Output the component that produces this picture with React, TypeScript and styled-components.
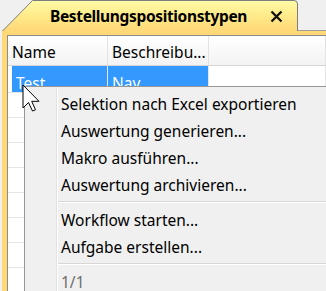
import React from "react";
import styled, { createGlobalStyle } from "styled-components";

const Global = createGlobalStyle`
  html, body { margin: 0; padding: 0; background: #f0f0f0; overflow: hidden; }
  #root { width: 326px; height: 291px; }
`;

const Page = styled.div`
  position: relative;
  width: 326px;
  height: 291px;
  overflow: hidden;
  display: flex;
  flex-direction: column;
  background: #f0f0f0;
  font-family: "Noto Sans", "Open Sans", sans-serif;
  color: #000;
`;

const TabStrip = styled.div`
  height: 36px;
  display: flex;
  align-items: flex-end;
  padding-left: 2px;
  box-sizing: border-box;
`;

const Tab = styled.div`
  position: relative;
  width: 296px;
  height: 31px;
  display: flex;
  align-items: center;
  padding-left: 48px;
  box-sizing: border-box;
`;

const TabShape = styled.svg`
  position: absolute;
  left: 0;
  top: 0;
  width: 296px;
  height: 31px;
`;

const TabTitle = styled.span`
  position: relative;
  font-weight: 700;
  font-size: 15.5px;
  letter-spacing: -0.35px;
  margin-top: 1px;
`;

const CloseButton = styled.span`
  position: relative;
  margin-left: 23px;
  margin-top: 1px;
  display: flex;
`;

const StripRest = styled.div`
  flex: 1;
  height: 100%;
  border-bottom: 1px solid #a0a0a0;
  box-sizing: border-box;
`;

const Frame = styled.div`
  flex: 1;
  margin-left: 2px;
  padding: 4px 0 0 5px;
  background: #ffd877;
  display: flex;
`;

const Grid = styled.div`
  flex: 1;
  background: #fff;
  border-top: 1px solid #8c8c8c;
  border-left: 1px solid #8c8c8c;
`;

const Row = styled.div<{ $height: number; $header?: boolean }>`
  display: grid;
  grid-template-columns: 100px 101px 1fr;
  height: ${(p) => p.$height}px;
  box-sizing: border-box;
  border-bottom: 1px solid ${(p) => (p.$header ? "#d5d5d5" : "#e6e6e6")};
  background: ${(p) => (p.$header ? "linear-gradient(#ffffff, #f3f3f3)" : "#fff")};
`;

const HeaderCell = styled.div`
  display: flex;
  align-items: center;
  padding: 3px 0 0 4px;
  font-size: 15.5px;
  border-right: 1px solid #e3e3e3;
  white-space: nowrap;
  overflow: hidden;
`;

const Cell = styled.div<{ $selected?: boolean; $inset?: number }>`
  display: flex;
  align-items: center;
  font-size: 15.5px;
  padding: 7px 0 0 4px;
  box-sizing: border-box;
  border-right: 1px solid #e6e6e6;
  color: ${(p) => (p.$selected ? "#fff" : "#000")};
  background: ${(p) => (p.$selected ? "#3399ff" : "transparent")};
  margin-left: ${(p) => p.$inset ?? 0}px;
  white-space: nowrap;
  overflow: hidden;
`;

const Menu = styled.div`
  position: absolute;
  left: 24px;
  top: 86px;
  right: -10px;
  bottom: -10px;
  background: #f0f0f0;
  border-top: 1px solid #979797;
  border-left: 1px solid #979797;
  padding-top: 3px;
`;

const Gutter = styled.div`
  position: absolute;
  left: 31px;
  top: 0;
  bottom: 0;
  width: 1px;
  background: #e2e2e2;
  border-right: 1px solid #ffffff;
`;

const MenuItem = styled.div<{ $disabled?: boolean }>`
  position: relative;
  height: 27px;
  display: flex;
  align-items: center;
  padding-left: 36px;
  font-size: 15.5px;
  white-space: nowrap;
  color: ${(p) => (p.$disabled ? "#6d6d6d" : "#000")};
`;

const Separator = styled.div`
  position: relative;
  height: 8px;
  margin-left: 33px;
  display: flex;
  align-items: center;
  &::after {
    content: "";
    display: block;
    width: 100%;
    height: 1px;
    background: #d7d7d7;
    border-bottom: 1px solid #ffffff;
  }
`;

const Cursor = styled.svg`
  position: absolute;
  left: 22px;
  top: 84px;
`;

const rows = [0, 1, 2, 3, 4, 5, 6, 7];

export default function App() {
  return (
    <Page>
      <Global />
      <TabStrip>
        <Tab>
          <TabShape viewBox="0 0 296 31">
            <defs>
              <linearGradient id="tabg" x1="0" y1="0" x2="0" y2="1">
                <stop offset="0" stopColor="#fffba8" />
                <stop offset="0.45" stopColor="#ffec8c" />
                <stop offset="1" stopColor="#ffd877" />
              </linearGradient>
            </defs>
            <path
              d="M0.5 31 L30.5 0.5 L292 0.5 Q295.5 0.5 295.5 4 L295.5 31 Z"
              fill="url(#tabg)"
            />
            <path
              d="M0.5 31 L30.5 0.5 L292 0.5 Q295.5 0.5 295.5 4 L295.5 31"
              fill="none"
              stroke="#7d7d7d"
              strokeWidth="1"
            />
          </TabShape>
          <TabTitle>Bestellungspositionstypen</TabTitle>
          <CloseButton>
            <svg width="13" height="13" viewBox="0 0 13 13">
              <path d="M1.5 1.5 L11.5 11.5 M11.5 1.5 L1.5 11.5" stroke="#111" strokeWidth="2.3" />
            </svg>
          </CloseButton>
        </Tab>
        <StripRest />
      </TabStrip>
      <Frame>
        <Grid>
          <Row $height={30} $header>
            <HeaderCell>Name</HeaderCell>
            <HeaderCell>Beschreibu...</HeaderCell>
            <HeaderCell />
          </Row>
          <Row $height={27}>
            <Cell $selected $inset={4}>Test</Cell>
            <Cell $selected>Nav</Cell>
            <Cell />
          </Row>
          {rows.map((r) => (
            <Row key={r} $height={25}>
              <Cell />
              <Cell />
              <Cell />
            </Row>
          ))}
        </Grid>
      </Frame>
      <Menu>
        <Gutter />
        <MenuItem>Selektion nach Excel exportieren</MenuItem>
        <MenuItem>Auswertung generieren...</MenuItem>
        <MenuItem>Makro ausführen...</MenuItem>
        <MenuItem>Auswertung archivieren...</MenuItem>
        <Separator />
        <MenuItem>Workflow starten...</MenuItem>
        <MenuItem>Aufgabe erstellen...</MenuItem>
        <Separator />
        <MenuItem $disabled>1/1</MenuItem>
      </Menu>
      <Cursor width="19" height="29" viewBox="0 0 19 29">
        <path
          d="M1 1 L1 24 L6.5 18.5 L10.5 27 L13.5 25.8 L9.7 17.3 L17 17.3 Z"
          fill="#fff"
          stroke="#000"
          strokeWidth="1"
          strokeLinejoin="miter"
        />
      </Cursor>
    </Page>
  );
}
